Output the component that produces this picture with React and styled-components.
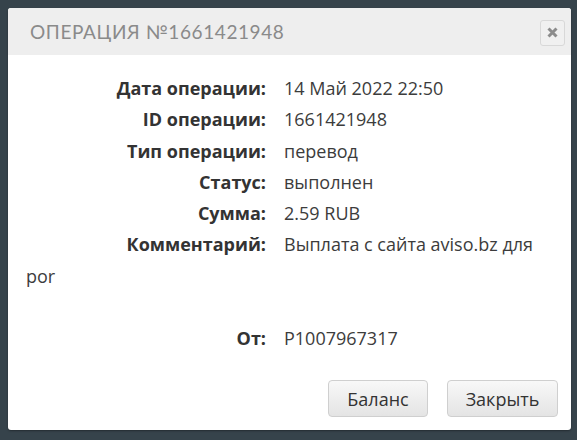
import React from 'react';
import styled, { createGlobalStyle } from 'styled-components';

const GlobalStyle = createGlobalStyle`
  html, body {
    margin: 0;
    padding: 0;
    background: #36434b;
  }
`;

const Overlay = styled.div`
  width: 577px;
  height: 440px;
  padding: 8px 6px 10px 8px;
  box-sizing: border-box;
`;

const Dialog = styled.div`
  background: #fff;
  border-radius: 3px;
  height: 100%;
  display: flex;
  flex-direction: column;
  box-shadow: 0 1px 2px rgba(0, 0, 0, 0.35);
  overflow: hidden;
`;

const Header = styled.div`
  height: 47px;
  background: #eeeeee;
  display: flex;
  align-items: center;
  justify-content: space-between;
  padding: 0 6px 0 22px;
`;

const Title = styled.h3`
  margin: 0;
  font-family: Lato, 'Liberation Sans', sans-serif;
  font-weight: 400;
  font-size: 19px;
  letter-spacing: 0.6px;
  color: #8a8a8a;
`;

const CloseButton = styled.button`
  width: 25px;
  height: 26px;
  padding: 0;
  border: 1px solid #d8d8d8;
  border-radius: 3px;
  background: #f0f0f0;
  color: #8c8c8c;
  display: flex;
  align-items: center;
  justify-content: center;
  margin-top: 2px;
`;

const Body = styled.div`
  flex: 1;
  padding: 18px 18px 0 18px;
  font-family: 'Open Sans', 'Noto Sans', sans-serif;
  font-size: 18px;
  line-height: 31.3px;
  color: #3c3c3c;
`;

const Label = styled.span`
  display: inline-block;
  width: 240px;
  margin-right: 18px;
  text-align: right;
  font-weight: 700;
  color: #333;
`;

const Footer = styled.div`
  display: flex;
  justify-content: flex-end;
  gap: 19px;
  padding: 0 13px 13px 0;
`;

const Button = styled.button`
  width: ${(p) => p.$w}px;
  height: 37px;
  padding: 0;
  border: 1px solid #cfcfcf;
  border-radius: 4px;
  background: linear-gradient(#f8f8f8, #e4e4e4);
  font-family: 'Open Sans', 'Noto Sans', sans-serif;
  font-size: 18px;
  color: #333;
`;

const rows = [
  ['Дата операции:', '14 Май 2022 22:50'],
  ['ID операции:', '1661421948'],
  ['Тип операции:', 'перевод'],
  ['Статус:', 'выполнен'],
  ['Сумма:', '2.59 RUB'],
  ['Комментарий:', 'Выплата с сайта aviso.bz для por'],
];

const App = () => (
  <>
    <GlobalStyle />
    <Overlay>
      <Dialog>
        <Header>
          <Title>ОПЕРАЦИЯ №1661421948</Title>
          <CloseButton aria-label="close">
            <svg width="11" height="11" viewBox="0 0 11 11">
              <path d="M1.5 1.5 L9.5 9.5 M9.5 1.5 L1.5 9.5" stroke="#8c8c8c" strokeWidth="3" />
            </svg>
          </CloseButton>
        </Header>
        <Body>
          {rows.map(([label, value]) => (
            <React.Fragment key={label}>
              <Label>{label}</Label>
              {value}
              <br />
            </React.Fragment>
          ))}
          <br />
          <Label>От:</Label>
          P1007967317
        </Body>
        <Footer>
          <Button $w={100}>Баланс</Button>
          <Button $w={111}>Закрыть</Button>
        </Footer>
      </Dialog>
    </Overlay>
  </>
);

export default App;
